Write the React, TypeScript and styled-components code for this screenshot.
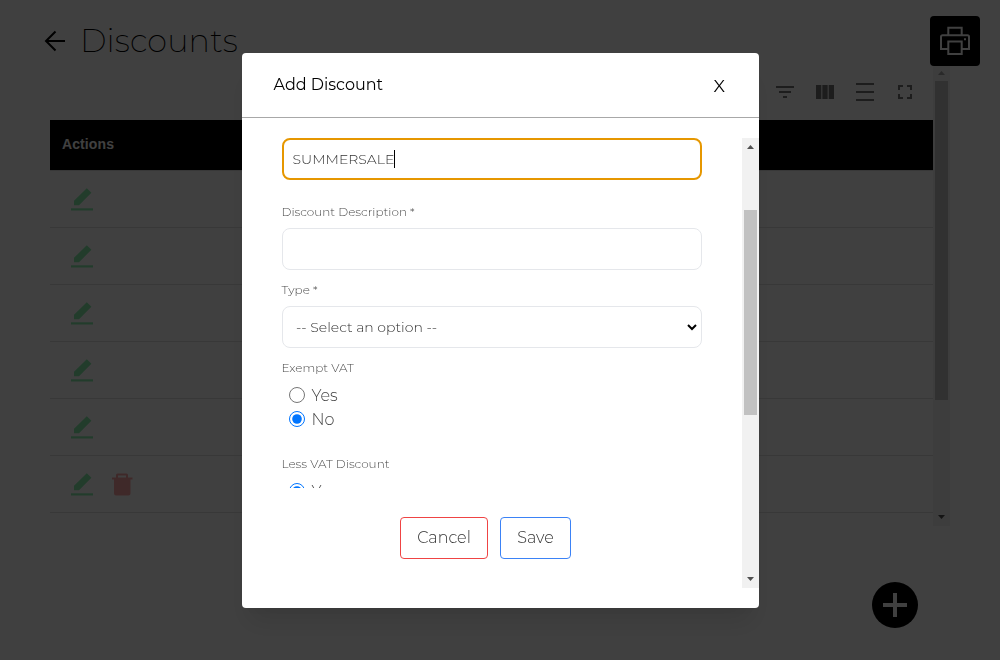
import React from "react";
import styled, { createGlobalStyle } from "styled-components";

const Global = createGlobalStyle`
  * { box-sizing: border-box; }
  body { margin: 0; background: #fff; overflow: hidden; font-family: Montserrat, Inter, "Liberation Sans", sans-serif; font-weight: 300; color: #000; }
`;

const Page = styled.div`
  height: 660px; padding: 16px 20px 0 50px; display: flex; flex-direction: column;
`;
const TopBar = styled.header`
  display: flex; justify-content: space-between; height: 50px;
`;
const TitleGroup = styled.div`
  display: flex; align-items: center; gap: 13px; margin-left: -7px;
`;
const Title = styled.h1`
  margin: 0; font-size: 32px; line-height: 50px; font-weight: 200; letter-spacing: 0.12px;
`;
const PrintButton = styled.button`
  width: 50px; height: 50px; padding: 0; border: 0; border-radius: 4px; background: #000; color: #fff;
  display: flex; align-items: center; justify-content: center;
`;
const TableArea = styled.div`
  display: flex; width: 900px; height: 460px;
`;
const Table = styled.div`flex: 1; display: flex; flex-direction: column;`;
const Toolbar = styled.div`
  height: 54px; display: flex; justify-content: flex-end; align-items: center; gap: 16px;
  padding: 0 16px 2px 0; color: #757575;
`;
const HeadRow = styled.div`
  height: 51px; background: #000; border-bottom: 1px solid #e0e0e0; color: #fff; padding-left: 12px;
  font: bold 14px/48px "Liberation Sans", Arial, sans-serif; letter-spacing: 0.1px;
`;
const Row = styled.div`
  height: 57px; border-bottom: 1px solid #e0e0e0; padding: 0 21px; display: flex; align-items: center; gap: 18px;
`;
const AddButton = styled.button`
  align-self: flex-end; margin: 56px 62px 0 0; width: 46px; height: 46px; flex: none; padding: 0; border: 0;
  border-radius: 50%; background: #000; color: #fff; display: flex; align-items: center; justify-content: center;
`;

const Track = styled.div`
  width: 17px; flex: none; background: #f1f1f1; display: flex; flex-direction: column; align-items: center;
`;
const TrackArrow = styled.svg<{ $size: number }>`
  width: 17px; height: ${(p) => p.$size}px; flex: none; display: block;
`;
const Thumb = styled.div<{ $top: number; $height: number }>`
  width: 13px; height: ${(p) => p.$height}px; margin-top: ${(p) => p.$top}px; margin-bottom: auto; background: #c1c1c1;
`;

const Overlay = styled.div`
  position: fixed; inset: 0; background: rgba(0, 0, 0, 0.75); display: flex; justify-content: center; align-items: flex-start;
  padding: 53px 0 0 1px;
`;
const Modal = styled.section`
  width: 517px; height: 555px; background: #fff; border-radius: 4px; overflow: hidden;
  box-shadow: 0 20px 25px -5px rgba(0, 0, 0, 0.1), 0 10px 10px -5px rgba(0, 0, 0, 0.04);
`;
const ModalHead = styled.div`
  height: 65px; border-bottom: 1px solid #a8a8a8; display: flex; justify-content: space-between; align-items: center;
  padding: 0 34px 0 31.5px; font-size: 16px; font-weight: 400;
`;
const ModalTitle = styled.span`padding-bottom: 1px;`;
const CloseButton = styled.button`
  border: 0; background: none; padding: 0; font: inherit; font-size: 17.5px; font-weight: 400; color: #000;
`;
const ModalBody = styled.div`display: flex; height: 450px; margin-top: 20px;`;
const BodyContent = styled.div`flex: 1; display: flex; flex-direction: column;`;
const Form = styled.form`
  height: 350px; overflow: hidden; padding: 0 40px; display: flex; flex-direction: column;
`;
const Field = styled.div<{ $focused?: boolean }>`
  height: 42px; flex: none; border-radius: 8px; display: flex; align-items: center; font-size: 14px;
  border: ${(p) => (p.$focused ? "2px solid #e69700" : "1px solid #e5e7eb")};
  padding-left: ${(p) => (p.$focused ? 8.5 : 13)}px; color: #333;
`;
const Caret = styled.span`width: 1px; height: 18px; background: #000;`;
const OptionText = styled.span`flex: 1;`;
const Label = styled.label<{ $top: number }>`
  margin: ${(p) => p.$top}px 0 8px -0.5px; height: 16px; flex: none; font-size: 12px; line-height: 16px; color: #4a4a4a;
`;
const ChoiceGroup = styled.div`margin: -1px 0 1px; flex: none;`;
const Choice = styled.label`
  height: 24px; display: flex; align-items: center; gap: 6.5px; padding-left: 7px; font-size: 16px; color: #444;
`;
const Radio = styled.input`
  width: 16px; height: 16px; margin: 0;
`;
const Actions = styled.div`display: flex; gap: 12px; padding: 29px 0 0 158px;`;
const ActionButton = styled.button<{ $color: string; $width: number }>`
  width: ${(p) => p.$width}px; height: 42px; border: 1px solid ${(p) => p.$color}; border-radius: 4px; background: #fff;
  font: inherit; font-size: 16px; color: #333; padding: 0 0 2px;
`;

const toolbarIcons = [
  "M10 18h4v-2h-4v2zM3 6v2h18V6H3zm3 7h12v-2H6v2z",
  "M14.67 5v14H9.33V5h5.34zm1 14H21V5h-5.33v14zm-7.34 0V5H3v14h5.33z",
  "M3 3h18v2H3zM3 19h18v2H3zM3 11h18v2H3z",
  "M7 14H5v5h5v-2H7v-3zm-2-4h2V7h3V5H5v5zm12 7h-3v2h5v-5h-2v3zM14 5v2h3v3h2V5h-5z",
];

const EditIcon = () => (
  <svg width="22" height="23" viewBox="0 0 22 23" fill="#86efac">
    <path d="M15.8 0.2 20.4 4.8 8 17.2H3V12.8z" />
    <path d="M0 20.3h22v2.2H0z" />
  </svg>
);
const TrashIcon = () => (
  <svg width="22" height="23" viewBox="0 0 22 23" fill="#fca5a5">
    <path fillRule="evenodd" d="M6.500 0.500h9a1.500 1.500 0 0 1 1.500 1.500v2.500h4.500v2H19.500V20.500a2 2 0 0 1-2 2H5a2 2 0 0 1-2-2V6.500H1v-2h4V2A1.500 1.500 0 0 1 6.500 .5zM7 2.500v2h8v-2z" />
  </svg>
);
const ScrollBar = ({ top, height, size, dim }: { top: number; height: number; size: number; dim?: boolean }) => (
  <Track>
    <TrackArrow $size={size} viewBox={`0 0 17 ${size}`}>
      <path d={`M5 ${size - 6}h7L8.5 ${size - 10}z`} fill={dim ? "#a3a3a3" : "#505050"} />
    </TrackArrow>
    <Thumb $top={top} $height={height} />
    <TrackArrow $size={17} viewBox="0 0 17 17"><path d="M5 6h7L8.5 10z" fill="#505050" /></TrackArrow>
  </Track>
);

export default function App() {
  return (
    <>
      <Global />
      <Page>
        <TopBar>
          <TitleGroup>
            <svg width="24" height="24" viewBox="0 0 24 24" fill="none" stroke="#000" strokeWidth="2">
              <path d="M22 12H3M12.500 2.500 3 12l9.500 9.500" />
            </svg>
            <Title>Discounts</Title>
          </TitleGroup>
          <PrintButton aria-label="Print">
            <svg width="30" height="30" viewBox="0 0 30 30" fill="none" stroke="currentColor" strokeWidth="2">
              <path d="M8.300 9V1.700h13.400V9M8 23H1V10.800a1.500 1.500 0 0 1 1.500-1.500h25a1.500 1.500 0 0 1 1.500 1.500V23h-7M8.300 15.500h13.400V28H8.300z" />
              <path d="M24 13.200h2" />
            </svg>
          </PrintButton>
        </TopBar>
        <TableArea>
          <Table>
            <Toolbar>
              {toolbarIcons.map((d) => (
                <svg key={d} width="24" height="24" viewBox="0 0 24 24" fill="currentColor"><path d={d} /></svg>
              ))}
            </Toolbar>
            <HeadRow>Actions</HeadRow>
            {[0, 1, 2, 3, 4, 5].map((i) => (
              <Row key={i}><EditIcon />{i === 5 && <TrashIcon />}</Row>
            ))}
          </Table>
          <ScrollBar top={0} height={319} size={15} dim />
        </TableArea>
        <AddButton aria-label="Add">
          <svg width="24" height="24" stroke="currentColor" strokeWidth="4"><path d="M12 0v24M0 12h24" /></svg>
        </AddButton>
      </Page>
      <Overlay>
        <Modal>
          <ModalHead><ModalTitle>Add Discount</ModalTitle><CloseButton>X</CloseButton></ModalHead>
          <ModalBody>
            <BodyContent>
              <Form>
                <Field $focused><span>SUMMERSALE</span><Caret /></Field>
                <Label $top={24}>Discount Description *</Label>
                <Field />
                <Label $top={12}>Type *</Label>
                <Field>
                  <OptionText>-- Select an option --</OptionText>
                  <svg width="18" height="8" viewBox="0 0 18 8" fill="none" stroke="#000" strokeWidth="2"><path d="m5 2 4 4 4-4" /></svg>
                </Field>
                <Label $top={12}>Exempt VAT</Label>
                <ChoiceGroup>
                  <Choice><Radio type="radio" name="exempt" />Yes</Choice>
                  <Choice><Radio type="radio" name="exempt" defaultChecked />No</Choice>
                </ChoiceGroup>
                <Label $top={24}>Less VAT Discount</Label>
                <ChoiceGroup>
                  <Choice><Radio type="radio" name="less" defaultChecked />Yes</Choice>
                </ChoiceGroup>
              </Form>
              <Actions>
                <ActionButton $color="#ef4444" $width={88}>Cancel</ActionButton>
                <ActionButton $color="#3b82f6" $width={71}>Save</ActionButton>
              </Actions>
            </BodyContent>
            <ScrollBar top={55} height={205} size={17} />
          </ModalBody>
        </Modal>
      </Overlay>
    </>
  );
}
